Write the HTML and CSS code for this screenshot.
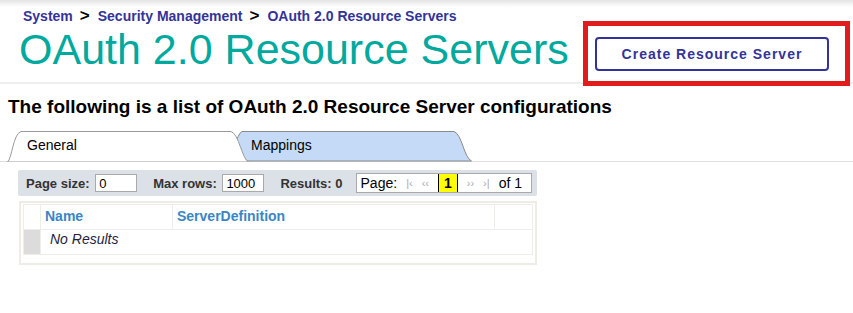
FILE: index.html
```html
<!DOCTYPE html>
<html lang="en">
<head>
<meta charset="UTF-8">
<title>OAuth 2.0 Resource Servers</title>
<link rel="stylesheet" href="styles.css">
</head>
<body>
  <div class="header">
    <div class="header-left">
      <div class="breadcrumb">
        <a href="#">System</a><span class="sep">&gt;</span><a href="#">Security Management</a><span class="sep">&gt;</span><a href="#">OAuth 2.0 Resource Servers</a>
      </div>
      <h1 class="title">OAuth 2.0 Resource Servers</h1>
    </div>
    <div class="action">
      <button class="create-btn">Create Resource Server</button>
    </div>
  </div>

  <h2 class="intro">The following is a list of OAuth 2.0 Resource Server configurations</h2>

  <div class="tabs">
    <div class="tab tab-active">
      <svg class="tab-shape" width="242" height="32" viewBox="0 0 242 32">
        <path d="M0.5,32 C5,29 6,4 14,1.5 L224,1.5 C232,4 235,29 241.5,32 Z" fill="#fff" stroke="#9a9a9a"/>
      </svg>
      <span class="tab-label">General</span>
    </div>
    <div class="tab tab-other">
      <svg class="tab-shape" width="244" height="32" viewBox="0 0 244 32">
        <path d="M0.5,31 C5,28 8,4 14,1.5 L226,1.5 C234,4 236,28 243.5,31 Z" fill="#c4daf6" stroke="#8a8a8a"/>
      </svg>
      <span class="tab-label">Mappings</span>
    </div>
  </div>

  <div class="pager">
    <label>Page size: <input class="pager-input" type="text" value="0"></label>
    <label>Max rows: <input class="pager-input" type="text" value="1000"></label>
    <span class="results">Results: 0</span>
    <div class="page-box">
      <span>Page:</span>
      <span class="nav">|&lsaquo;</span>
      <span class="nav">&lsaquo;&lsaquo;</span>
      <span class="current">1</span>
      <span class="nav">&rsaquo;&rsaquo;</span>
      <span class="nav">&rsaquo;|</span>
      <span>of 1</span>
    </div>
  </div>

  <div class="grid-wrap">
    <table class="grid">
      <colgroup>
        <col class="c-sel">
        <col class="c-name">
        <col>
        <col class="c-end">
      </colgroup>
      <tr class="grid-head">
        <th></th>
        <th>Name</th>
        <th>ServerDefinition</th>
        <th></th>
      </tr>
      <tr class="grid-row">
        <td class="sel-row"></td>
        <td colspan="3" class="empty">No Results</td>
      </tr>
    </table>
  </div>
</body>
</html>
```

FILE: styles.css
```css
body {
  font-family: "Liberation Sans", Arial, sans-serif;
  background-color: #fff;
  color: #000;
  margin: 0;
  padding: 0;
}
.header {
  display: flex;
  justify-content: space-between;
  height: 82px;
  border-bottom: 2px solid #eee;
  background: linear-gradient(#e4e4e4 0, #fff 7px);
}
.header-left {
  padding-left: 23px;
  padding-top: 8px;
}
.breadcrumb {
  font-size: 14px;
  font-weight: bold;
  line-height: 16px;
}
.breadcrumb a {
  color: #333399;
  text-decoration: none;
}
.breadcrumb .sep {
  color: #000;
  font-size: 17px;
  margin: 0 8px 0 7px;
}
.title {
  margin: 1px 0 0 -4px;
  font-size: 43px;
  font-weight: normal;
  line-height: 48px;
  color: #00a99d;
}
.action {
  position: relative;
  padding: 37px 24px 0 0;
}
.action::after {
  content: "";
  position: absolute;
  top: 21px;
  left: -12px;
  right: 3px;
  height: 55px;
  border: 5px solid #e21b1b;
}
.create-btn {
  width: 234px;
  height: 34px;
  font-family: inherit;
  font-size: 14px;
  font-weight: bold;
  letter-spacing: 1px;
  color: #333399;
  background: #fff;
  border: 2px solid #333399;
  border-radius: 4px;
}
.intro {
  margin: 11px 0 0 8px;
  font-size: 19px;
  line-height: 23px;
}
.tabs {
  display: flex;
  margin-top: 12px;
  padding-left: 7px;
  height: 31px;
  border-bottom: 1px solid #ddd;
}
.tab {
  position: relative;
  height: 32px;
  font-size: 14px;
}
.tab-shape {
  position: absolute;
  top: 0;
  left: 0;
}
.tab-label {
  position: relative;
  display: block;
  padding-top: 7px;
}
.tab-active {
  width: 242px;
  z-index: 2;
}
.tab-active .tab-label {
  padding-left: 20px;
}
.tab-other {
  width: 244px;
  margin-left: -21px;
  height: 31px;
}
.tab-other .tab-label {
  padding-left: 23px;
}
.pager {
  display: flex;
  align-items: center;
  margin: 8px 0 0 18px;
  width: 519px;
  height: 26px;
  box-sizing: border-box;
  padding-left: 8px;
  background-color: #dce0e7;
  border-radius: 2px;
  font-size: 13px;
  font-weight: bold;
  color: #333;
}
.pager label {
  margin-right: 16px;
}
.pager-input {
  width: 42px;
  height: 18px;
  box-sizing: border-box;
  padding: 0 3px;
  font-family: inherit;
  font-size: 13px;
  border: 1px solid #a9a9a9;
  margin-left: 2px;
}
.results {
  margin-right: 13px;
}
.page-box {
  display: flex;
  align-items: center;
  gap: 9px;
  height: 20px;
  box-sizing: border-box;
  width: 176px;
  padding: 0 6px 0 4px;
  background-color: #fff;
  border: 1px solid #a9a9a9;
  font-weight: normal;
  font-size: 14px;
  color: #000;
}
.page-box .nav {
  color: #aaa;
  font-size: 11px;
}
.page-box .current {
  background-color: #ffff00;
  border-left: 1px solid #000;
  border-right: 1px solid #000;
  padding: 0 5px;
  font-weight: bold;
  line-height: 18px;
}
.grid-wrap {
  margin: 5px 0 0 19px;
  width: 518px;
  box-sizing: border-box;
  border: 2px solid #edede5;
  padding: 1px 2px 8px;
}
.grid {
  width: 100%;
  table-layout: fixed;
  border-collapse: collapse;
}
.c-sel {
  width: 17px;
}
.c-name {
  width: 132px;
}
.c-end {
  width: 38px;
}
.grid th, .grid td {
  border: 1px solid #eeeee8;
  padding: 0;
  vertical-align: top;
}
.grid-head th {
  height: 25px;
  box-sizing: border-box;
  padding: 3px 0 0 4px;
  text-align: left;
  font-size: 14px;
  color: #3a86c4;
}
.grid-row td {
  height: 25px;
  box-sizing: border-box;
}
.sel-row {
  background-color: #dcdcdc;
}
.empty {
  font-size: 14px;
  font-style: italic;
  color: #1e1e40;
  padding: 1px 0 0 9px !important;
}
```
